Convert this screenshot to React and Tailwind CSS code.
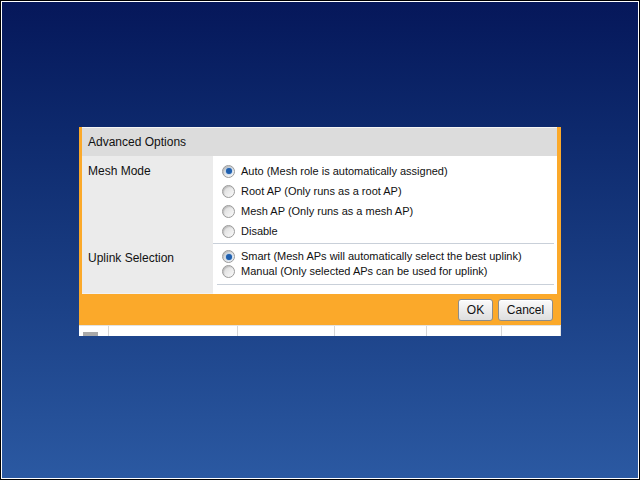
import { useState } from 'react'

const meshModes = [
  { id: 'auto', label: 'Auto (Mesh role is automatically assigned)' },
  { id: 'root', label: 'Root AP (Only runs as a root AP)' },
  { id: 'mesh', label: 'Mesh AP (Only runs as a mesh AP)' },
  { id: 'disable', label: 'Disable' },
]

const uplinkModes = [
  { id: 'smart', label: 'Smart (Mesh APs will automatically select the best uplink)' },
  { id: 'manual', label: 'Manual (Only selected APs can be used for uplink)' },
]

function Radio({ checked }) {
  return (
    <span className="relative flex h-[13px] w-[13px] shrink-0 items-center justify-center rounded-full border border-[#9a9a9a] bg-gradient-to-br from-[#d8d8d8] to-[#fbfbfb] shadow-[inset_1px_1px_1px_rgba(0,0,0,0.15)]">
      {checked && (
        <span className="h-[6px] w-[6px] rounded-full bg-[#1f5fae] shadow-[0_0_2px_#5b9be0]" />
      )}
    </span>
  )
}

function RadioRow({ option, checked, onSelect, h }) {
  return (
    <button
      type="button"
      onClick={() => onSelect(option.id)}
      className={`flex w-full items-center gap-[6px] pl-[9px] text-left ${h}`}
    >
      <Radio checked={checked} />
      <span className="text-[11px] leading-none text-[#111]">{option.label}</span>
    </button>
  )
}

function Button({ children, w }) {
  return (
    <button
      type="button"
      className={`h-[22px] ${w} rounded-[3px] border border-[#8c8c8c] bg-gradient-to-b from-[#fbfbfb] to-[#dedede] text-[12px] text-[#111] shadow-[inset_0_1px_0_#fff]`}
    >
      {children}
    </button>
  )
}

export default function App() {
  const [mesh, setMesh] = useState('auto')
  const [uplink, setUplink] = useState('smart')

  return (
    <div
      className="h-[480px] w-[640px] border border-black"
      style={{ fontFamily: '"Liberation Sans", Arial, sans-serif' }}
    >
      <div className="h-full w-full border border-white bg-gradient-to-b from-[#06175a] via-[#16387d] to-[#2b59a2] pl-[77px] pt-[125px]">
        <div className="w-[482px]">
          {/* orange dialog frame */}
          <div className="bg-[#fba92a] pl-[3px] pr-[4px]">
            <div className="flex h-[29px] items-center border-t border-[#f4f4f4] bg-[#dcdcdc] pl-[6px] text-[12px] text-[#111]">
              Advanced Options
            </div>

            <div className="flex bg-white">
              <div className="w-[131px] bg-[#ebebeb] pl-[6px] pt-[6px] text-[12px] text-[#111]">
                Mesh Mode
              </div>
              <div className="flex-1 pr-[3px]">
                <div className="border-b border-[#c9d0d9] pb-[2px] pt-[5px]">
                  {meshModes.map((m) => (
                    <RadioRow
                      key={m.id}
                      option={m}
                      checked={mesh === m.id}
                      onSelect={setMesh}
                      h="h-[20px]"
                    />
                  ))}
                </div>
              </div>
            </div>

            <div className="flex bg-white">
              <div className="h-[50px] w-[131px] border-b border-[#f2f2f2] bg-[#ebebeb] pl-[6px] pt-[5px] text-[12px] text-[#111]">
                Uplink Selection
              </div>
              <div className="flex-1 pl-[4px] pr-[3px]">
                <div className="border-b border-[#c9d0d9] pb-[5px] pt-[5px]">
                  {uplinkModes.map((m) => (
                    <RadioRow
                      key={m.id}
                      option={m}
                      checked={uplink === m.id}
                      onSelect={setUplink}
                      h="h-[15px] -ml-[4px]"
                    />
                  ))}
                </div>
              </div>
            </div>

            <div className="flex h-[31px] items-center justify-end gap-[5px] pr-[4px]">
              <Button w="w-[35px]">OK</Button>
              <Button w="w-[55px]">Cancel</Button>
            </div>
          </div>

          {/* table rows underneath */}
          <div className="flex h-[11px] border-t border-[#e2e2e2] bg-white">
            <div className="relative w-[30px] border-r border-[#d6d6d6]">
              <div className="ml-[4px] mt-[6px] h-[4px] w-[15px] bg-[#a9a9a9]" />
            </div>
            <div className="w-[129px] border-r border-[#d6d6d6]" />
            <div className="w-[97px] border-r border-[#d6d6d6]" />
            <div className="w-[92px] border-r border-[#d6d6d6]" />
            <div className="w-[75px] border-r border-[#d6d6d6]" />
            <div className="flex-1 border-r border-[#e2e2e2]" />
          </div>
        </div>
      </div>
    </div>
  )
}
